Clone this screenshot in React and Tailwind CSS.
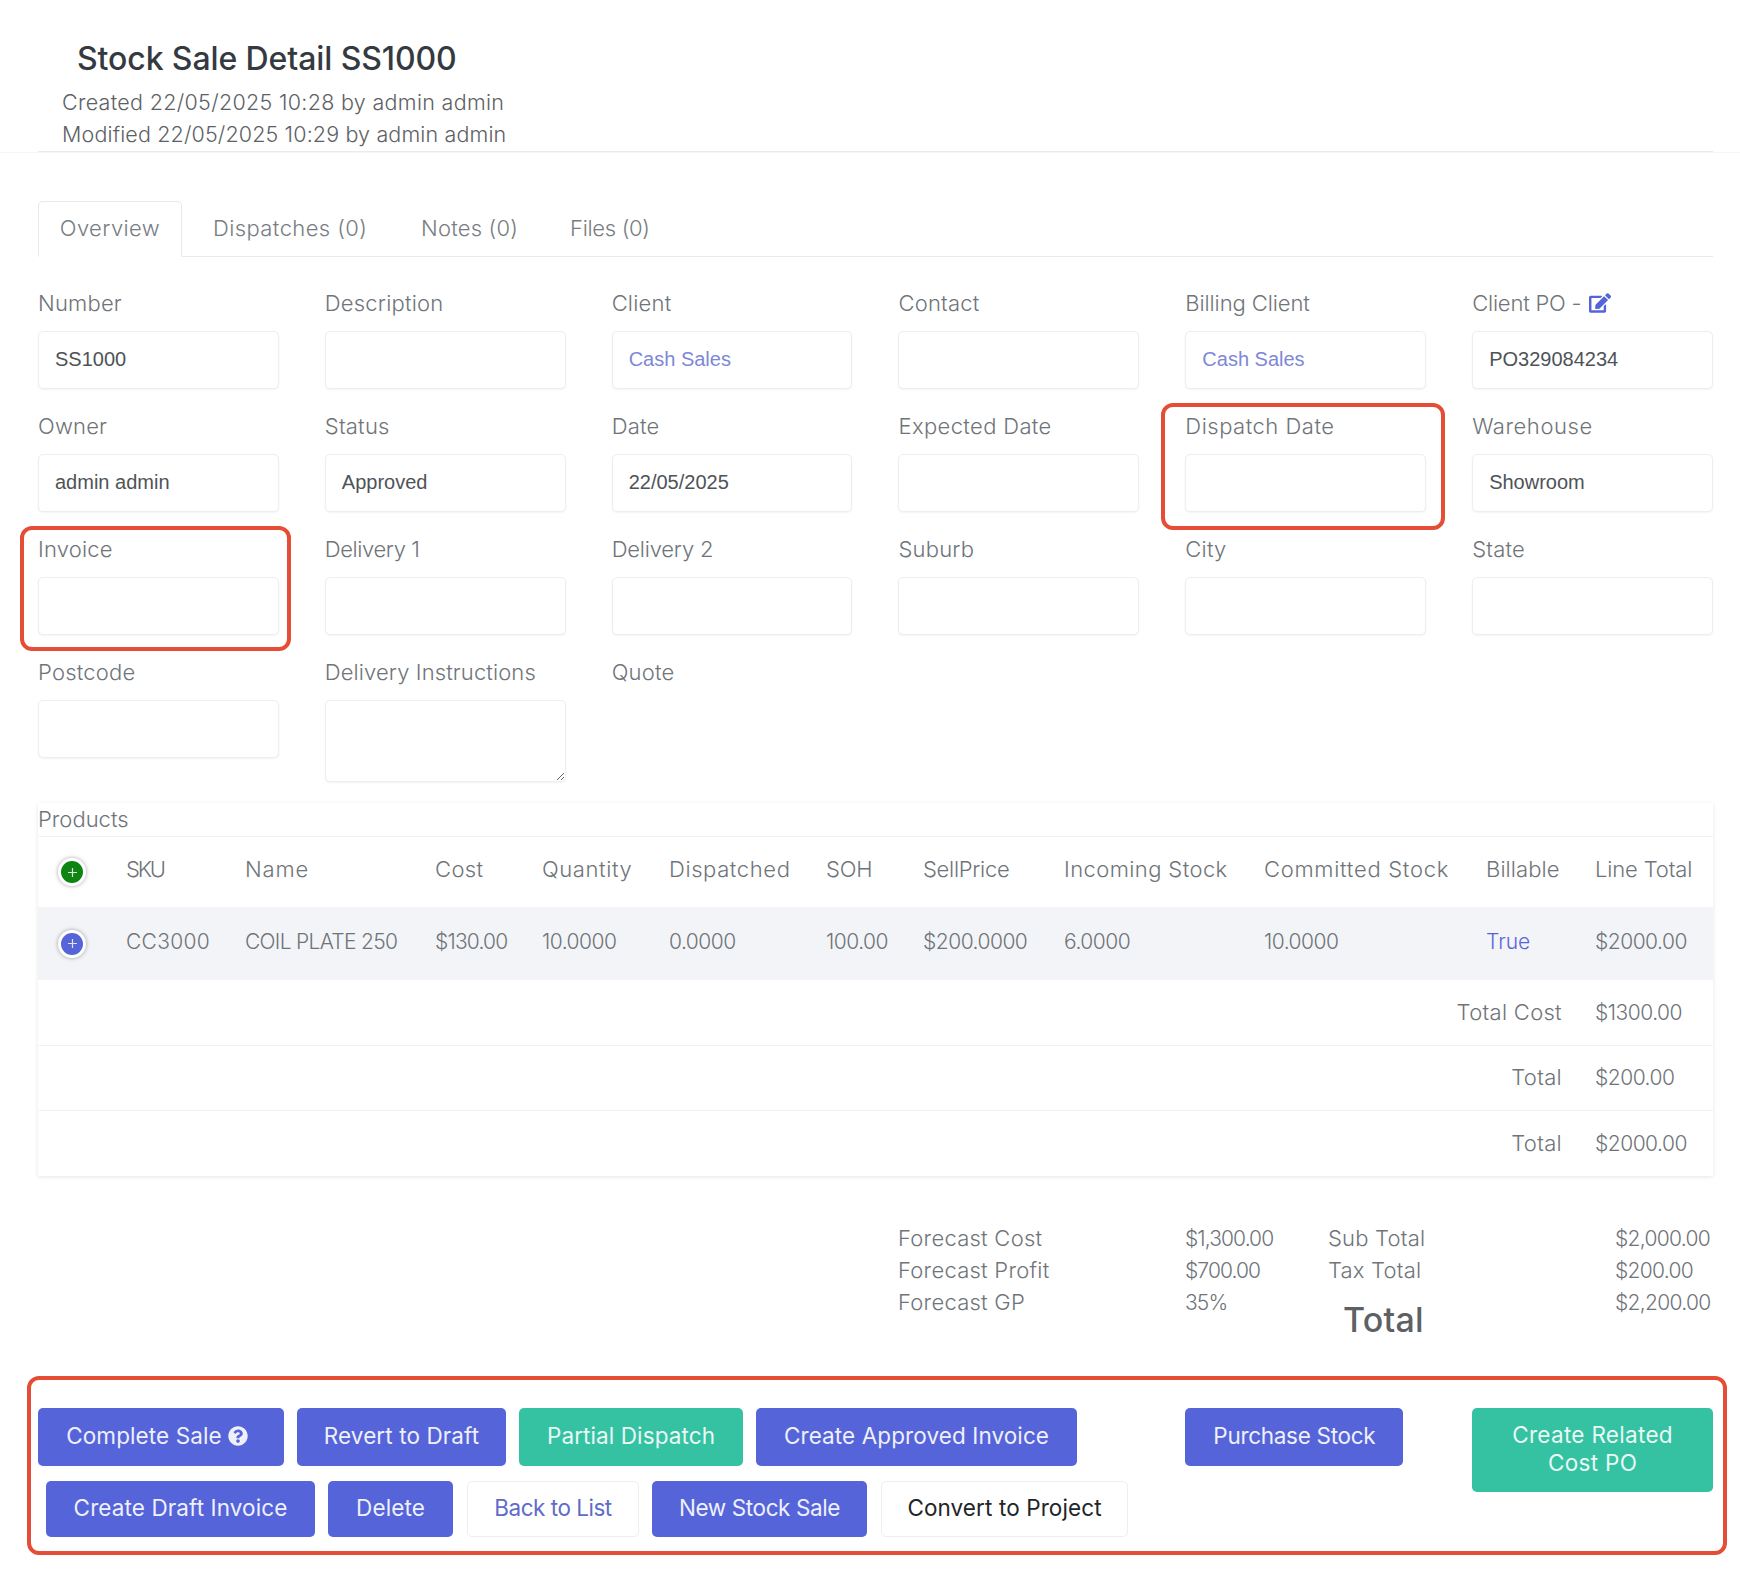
import React from "react";
import { FaEdit, FaQuestionCircle } from "react-icons/fa";

const SANS = "font-['Inter','Noto_Sans',sans-serif]";

function Field({ label, value, link, edit, mark, area, t = "tracking-[0.2px]" }) {
  return (
    <div className="relative">
      {mark && <div className={`absolute border-[4px] border-[#e54d37] rounded-[12px] pointer-events-none ${mark}`} />}
      <div className={`h-[30px] pt-[1px] mb-[13px] flex items-center gap-[8px] text-[22px] font-light text-[#6f7479] whitespace-nowrap ${t}`}>
        {label}
        {edit && <FaEdit className="text-[#5664d9] text-[22px] -mt-[2px]" />}
      </div>
      {area ? (
        <textarea readOnly className="block w-full h-[82px] border border-[#eceef1] rounded-[5px] shadow-[0_1px_2px_rgba(0,0,0,0.05)] bg-white" />
      ) : (
        <div className={`h-[58px] pb-[2px] border border-[#eceef1] rounded-[5px] shadow-[0_1px_2px_rgba(0,0,0,0.05)] bg-white pl-[16px] flex items-center font-['Liberation_Sans',sans-serif] text-[20px] ${link ? "text-[#7d88d8]" : "text-[#4e5358]"}`}>
          {value}
        </div>
      )}
    </div>
  );
}

function Round({ color }) {
  return (
    <div className="w-[28px] h-[28px] rounded-full bg-white shadow-[0_0_4px_rgba(0,0,0,0.35)] flex items-center justify-center">
      <div className={`w-[22px] h-[22px] rounded-full flex items-center justify-center ${color}`}>
        <svg width="11" height="11" viewBox="0 0 11 11" stroke="#dfe6dd" strokeWidth="1.2"><path d="M5.5 1v9M1 5.5h9" /></svg>
      </div>
    </div>
  );
}

function Btn({ w, h = "h-[58px]", kind = "blue", extra = "", t = "tracking-[0.1px]", children }) {
  const k = {
    blue: "bg-[#5664d9] text-[#eef0fb]",
    green: "bg-[#35c2a2] text-[#e9f8f4]",
    ghost: "bg-white text-[#5f6cc8] border border-[#eceef1]",
    plain: "bg-white text-[#212529] border border-[#eceef1]",
  }[kind];
  return (
    <div className={`${w} ${h} ${k} ${extra} ${t} shrink-0 pb-[2px] rounded-[5px] flex items-center justify-center text-center text-[22.5px] leading-[28px] font-normal`}>
      {children}
    </div>
  );
}

const heads = [
  ["SKU", "tracking-[-2.2px]"],
  ["Name", "tracking-[0.8px]"],
  ["Cost", "tracking-[0.4px]"],
  ["Quantity", "tracking-[0.6px]"],
  ["Dispatched", "tracking-[0.6px]"],
  ["SOH", "tracking-[-0.2px]"],
  ["SellPrice", "tracking-[-0.3px]"],
  ["Incoming Stock", "tracking-[0.4px]"],
  ["Committed Stock", "tracking-[0.7px]"],
  ["Billable", "tracking-[0.1px]"],
  ["Line Total", "tracking-[-0.15px]"],
];
const cells = [
  ["CC3000", "tracking-[0.3px]"],
  ["COIL PLATE 250", "tracking-[-0.7px]"],
  ["$130.00", "tracking-[-0.8px]"],
  ["10.0000", "tracking-[-0.5px]"],
  ["0.0000", "tracking-[-0.5px]"],
  ["100.00", "tracking-[-0.5px]"],
  ["$200.0000", "tracking-[-0.5px]"],
  ["6.0000", "tracking-[-0.5px]"],
  ["10.0000", "tracking-[-0.5px]"],
  ["True", "text-[#5664d9]"],
  ["$2000.00", "tracking-[-0.5px]"],
];
const widths = ["w-[88px]", "w-[119px]", "w-[190px]", "w-[107px]", "w-[127px]", "w-[157px]", "w-[97px]", "w-[141px]", "w-[200px]", "w-[222px]", "w-[109px]", "w-[118px]"];
const totals = [["Total Cost", "$1300.00", "h-[65px]"], ["Total", "$200.00", "h-[65px]"], ["Total", "$2000.00", "h-[66px]"]];

export default function App() {
  return (
    <div className={`relative w-[1740px] h-[1570px] overflow-hidden bg-white text-[#6f7479] ${SANS}`}>
      <header className="pt-[39px] border-b border-[#f3f4f5]">
        <h1 className="pl-[77px] h-[40px] leading-[40px] text-[32px] tracking-[-0.1px] font-medium text-[#343a40]">Stock Sale Detail SS1000</h1>
        <div className="mt-[7px] pl-[62px] text-[21.5px] leading-[32px] text-[#5d6165] font-light">
          <div className="tracking-[0.31px]">Created 22/05/2025 10:28 by admin admin</div>
          <div className="tracking-[0.14px]">Modified 22/05/2025 10:29 by admin admin</div>
        </div>
        <div className="ml-[38px] mr-[27px] pt-px border-b border-[#e9ebef]" />
      </header>

      <div className="px-[27px] pl-[38px]">
        <nav className="mt-[48px] h-[56px] flex border-b border-[#e9ebef] text-[22px] tracking-[0.4px] font-light text-[#787d82]">
          <div className="w-[144px] h-[56px] pb-[2px] border border-b-white border-[#e6e8ec] rounded-t-[5px] bg-white flex items-center justify-center">Overview</div>
          <div className="ml-[31px] w-[208px] flex items-center">Dispatches (0)</div>
          <div className="w-[149px] flex items-center tracking-[0.2px]">Notes (0)</div>
          <div className="flex items-center -tracking-[0.3px]">Files (0)</div>
        </nav>

        <section className="mt-[31px] grid grid-cols-6 gap-x-[46px] gap-y-[22px]">
          <Field label="Number" value="SS1000" />
          <Field label="Description" />
          <Field label="Client" value="Cash Sales" link />
          <Field label="Contact" />
          <Field label="Billing Client" value="Cash Sales" link t="tracking-[-0.1px]" />
          <Field label="Client PO -" value="PO329084234" edit t="tracking-[-0.2px]" />
          <Field label="Owner" value="admin admin" />
          <Field label="Status" value="Approved" />
          <Field label="Date" value="22/05/2025" />
          <Field label="Expected Date" t="tracking-[0.35px]" />
          <Field label="Dispatch Date" t="tracking-[0.5px]" mark="-left-[24px] -right-[19px] -top-[8px] -bottom-[18px]" />
          <Field label="Warehouse" value="Showroom" t="tracking-[0.55px]" />
          <Field label="Invoice" mark="-left-[18px] -right-[12px] -top-[8px] -bottom-[16px]" />
          <Field label="Delivery 1" t="tracking-[-0.4px]" />
          <Field label="Delivery 2" t="tracking-[-0.2px]" />
          <Field label="Suburb" />
          <Field label="City" />
          <Field label="State" />
          <Field label="Postcode" />
          <Field label="Delivery Instructions" area t="tracking-[0.1px]" />
          <div className="h-[30px] pt-[1px] flex items-center text-[22px] tracking-[0.2px] font-light">Quote</div>
        </section>

        <section className="mt-[21px] shadow-[0_1px_4px_rgba(0,0,0,0.1)] bg-white">
          <div className="h-[34px] border-b border-[#f1f2f4] flex items-center text-[22px] font-light">Products</div>
          <table className="w-full table-fixed border-collapse text-[21px] font-light">
            <colgroup>{widths.map((w) => <col key={w} className={w} />)}</colgroup>
            <tbody>
              <tr className="h-[70px]">
                <td className="pl-[20px]"><Round color="bg-[#0e8412]" /></td>
                {heads.map(([h, t]) => <td key={h} className={`pb-[5px] whitespace-nowrap text-[22px] ${t}`}>{h}</td>)}
              </tr>
              <tr className="h-[73px] bg-[#f3f4f8]">
                <td className="pl-[20px]"><Round color="bg-[#5664d9]" /></td>
                {cells.map(([c, t]) => (
                  <td key={c} className={`pb-[3px] whitespace-nowrap ${t}`}>{c}</td>
                ))}
              </tr>
              {totals.map(([a, b, h], i) => (
                <tr key={i} className={`${h} border-b border-[#f1f2f4] last:border-b-0`}>
                  <td colSpan={11} className="text-right pr-[33px] text-[22px] tracking-[0.3px]">{a}</td>
                  <td className="tracking-[-0.5px]">{b}</td>
                </tr>
              ))}
            </tbody>
          </table>
        </section>

        <section className="mt-[46px] ml-[860px] flex text-[22px] leading-[32px] font-light">
          <div className="w-[287px] tracking-[0.25px]"><div>Forecast Cost</div><div>Forecast Profit</div><div>Forecast GP</div></div>
          <div className="w-[143px] pt-px text-[21px] tracking-[-0.9px]"><div>$1,300.00</div><div>$700.00</div><div>35%</div></div>
          <div className="w-[287px] tracking-[0.2px]">
            <div>Sub Total</div><div>Tax Total</div>
            <div className="pl-[15px] pt-[14px] text-[34px] leading-[40px] font-medium text-[#5d6165]">Total</div>
          </div>
          <div className="pt-px text-[21px] tracking-[-0.7px]"><div>$2,000.00</div><div>$200.00</div><div>$2,200.00</div></div>
        </section>

        <section className="relative mt-[68px] grid grid-cols-6 gap-x-[46px]">
          <div className="absolute -left-[11px] -right-[14px] -top-[32px] -bottom-[18px] border-[4px] border-[#e54d37] rounded-[12px] pointer-events-none" />
          <div className="col-span-4">
            <div className="flex gap-[13px]">
              <Btn w="w-[246px]" extra="pr-[8px]"><span className="flex items-center gap-[6px]">Complete Sale <FaQuestionCircle className="text-[20px]" /></span></Btn>
              <Btn w="w-[209px]">Revert to Draft</Btn>
              <Btn w="w-[224px]" kind="green">Partial Dispatch</Btn>
              <Btn w="w-[321px]">Create Approved Invoice</Btn>
            </div>
            <div className="mt-[15px] ml-[8px] flex gap-[13px]">
              <Btn w="w-[269px]" h="h-[56px]">Create Draft Invoice</Btn>
              <Btn w="w-[125px]" h="h-[56px]">Delete</Btn>
              <Btn w="w-[172px]" h="h-[56px]" kind="ghost" extra="ml-px" t="-tracking-[0.5px]">Back to List</Btn>
              <Btn w="w-[215px]" h="h-[56px]" t="-tracking-[0.4px]">New Stock Sale</Btn>
              <Btn w="w-[247px]" h="h-[56px]" kind="plain" extra="ml-px">Convert to Project</Btn>
            </div>
          </div>
          <div><Btn w="w-[218px]" t="-tracking-[0.3px]">Purchase Stock</Btn></div>
          <div><Btn w="w-full" h="h-[84px]" kind="green" t="tracking-[0.3px]"><span>Create Related<br />Cost PO</span></Btn></div>
        </section>
      </div>
    </div>
  );
}
